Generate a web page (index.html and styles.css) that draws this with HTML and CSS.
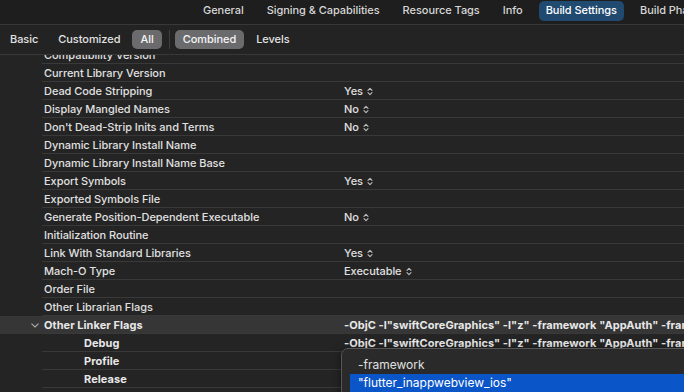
FILE: index.html
```html
<!DOCTYPE html>
<html>
<head>
<meta charset="utf-8">
<link rel="stylesheet" href="styles.css">
</head>
<body>
<div class="app">
  <div class="topbar">
    <span class="tab">General</span>
    <span class="tab">Signing &amp; Capabilities</span>
    <span class="tab">Resource Tags</span>
    <span class="tab">Info</span>
    <span class="tab active">Build Settings</span>
    <span class="tab">Build Phases</span>
  </div>
  <div class="toolbar">
    <span class="seg">Basic</span>
    <span class="seg">Customized</span>
    <span class="seg on">All</span>
    <span class="divider"></span>
    <span class="seg on">Combined</span>
    <span class="seg">Levels</span>
  </div>
  <div class="list">
    <div class="rows">
      <div class="row"><div class="gutter"></div><div class="cell name">Compatibility Version</div><div class="cell value"></div></div>
      <div class="row"><div class="gutter"></div><div class="cell name">Current Library Version</div><div class="cell value"></div></div>
      <div class="row"><div class="gutter"></div><div class="cell name">Dead Code Stripping</div><div class="cell value">Yes<svg class="updown" viewBox="0 0 6 9"><path d="M1 3.4 L3 1.4 L5 3.4 M1 5.6 L3 7.6 L5 5.6"/></svg></div></div>
      <div class="row"><div class="gutter"></div><div class="cell name">Display Mangled Names</div><div class="cell value">No<svg class="updown" viewBox="0 0 6 9"><path d="M1 3.4 L3 1.4 L5 3.4 M1 5.6 L3 7.6 L5 5.6"/></svg></div></div>
      <div class="row"><div class="gutter"></div><div class="cell name">Don't Dead-Strip Inits and Terms</div><div class="cell value">No<svg class="updown" viewBox="0 0 6 9"><path d="M1 3.4 L3 1.4 L5 3.4 M1 5.6 L3 7.6 L5 5.6"/></svg></div></div>
      <div class="row"><div class="gutter"></div><div class="cell name">Dynamic Library Install Name</div><div class="cell value"></div></div>
      <div class="row"><div class="gutter"></div><div class="cell name">Dynamic Library Install Name Base</div><div class="cell value"></div></div>
      <div class="row"><div class="gutter"></div><div class="cell name">Export Symbols</div><div class="cell value">Yes<svg class="updown" viewBox="0 0 6 9"><path d="M1 3.4 L3 1.4 L5 3.4 M1 5.6 L3 7.6 L5 5.6"/></svg></div></div>
      <div class="row"><div class="gutter"></div><div class="cell name">Exported Symbols File</div><div class="cell value"></div></div>
      <div class="row"><div class="gutter"></div><div class="cell name">Generate Position-Dependent Executable</div><div class="cell value">No<svg class="updown" viewBox="0 0 6 9"><path d="M1 3.4 L3 1.4 L5 3.4 M1 5.6 L3 7.6 L5 5.6"/></svg></div></div>
      <div class="row"><div class="gutter"></div><div class="cell name">Initialization Routine</div><div class="cell value"></div></div>
      <div class="row"><div class="gutter"></div><div class="cell name">Link With Standard Libraries</div><div class="cell value">Yes<svg class="updown" viewBox="0 0 6 9"><path d="M1 3.4 L3 1.4 L5 3.4 M1 5.6 L3 7.6 L5 5.6"/></svg></div></div>
      <div class="row"><div class="gutter"></div><div class="cell name">Mach-O Type</div><div class="cell value">Executable<svg class="updown" viewBox="0 0 6 9"><path d="M1 3.4 L3 1.4 L5 3.4 M1 5.6 L3 7.6 L5 5.6"/></svg></div></div>
      <div class="row"><div class="gutter"></div><div class="cell name">Order File</div><div class="cell value"></div></div>
      <div class="row"><div class="gutter"></div><div class="cell name">Other Librarian Flags</div><div class="cell value"></div></div>
      <div class="row selected"><div class="gutter"><svg class="disclose" viewBox="0 0 8 5"><path d="M0.8 0.8 L4 4 L7.2 0.8"/></svg></div><div class="cell name bold">Other Linker Flags</div><div class="cell value bold">-ObjC -l"swiftCoreGraphics" -l"z" -framework "AppAuth" -framework "flutter_inappwebview_ios"</div></div>
      <div class="row"><div class="gutter"></div><div class="cell name bold sub">Debug</div><div class="cell value bold">-ObjC -l"swiftCoreGraphics" -l"z" -framework "AppAuth" -framework "flutter_inappwebview_ios"</div></div>
      <div class="row"><div class="gutter"></div><div class="cell name bold sub">Profile</div><div class="cell value bold"></div></div>
      <div class="row"><div class="gutter"></div><div class="cell name bold sub">Release</div><div class="cell value bold"></div></div>
      <div class="row"><div class="gutter"></div><div class="cell name"></div><div class="cell value"></div></div>
    </div>
    <div class="popup">
      <div class="item">-framework</div>
      <div class="item hl">"flutter_inappwebview_ios"</div>
      <div class="item">-framework</div>
    </div>
  </div>
</div>
</body>
</html>
```

FILE: styles.css
```css
* { box-sizing: border-box; }
html, body {
  margin: 0;
  padding: 0;
  background: #242424;
  width: 684px;
  height: 392px;
  overflow: hidden;
}
.app {
  font-family: Inter, "Liberation Sans", sans-serif;
  font-size: 11px;
  color: #dedede;
  width: 684px;
  height: 392px;
  display: flex;
  flex-direction: column;
}
.topbar {
  height: 25px;
  background: #1e1e1e;
  border-bottom: 1px solid #383838;
  display: flex;
  align-items: flex-start;
  padding-top: 1px;
  padding-left: 196px;
  gap: 9px;
  white-space: nowrap;
  overflow: hidden;
  flex: none;
}
.tab {
  height: 20px;
  line-height: 19px;
  padding: 0 7px;
  color: #d6d6d6;
  font-weight: 500;
  border-radius: 5px;
  letter-spacing: -0.05px;
}
.tab.active {
  background: #214a70;
  color: #ffffff;
}
.toolbar {
  height: 30px;
  background: #232323;
  border-bottom: 1px solid #383838;
  display: flex;
  align-items: center;
  padding-left: 2px;
  gap: 4px;
  flex: none;
}
.seg {
  height: 19px;
  line-height: 19px;
  padding: 0 8px;
  font-weight: 500;
  color: #e2e2e2;
  border-radius: 5px;
  letter-spacing: -0.05px;
}
.seg.on {
  background: #6b6b6e;
  color: #f4f4f4;
}
.divider {
  width: 1px;
  height: 19px;
  background: #3e3e3e;
  margin: 0 1px 0 3px;
}
.list {
  flex: 1;
  position: relative;
  overflow: hidden;
}
.rows {
  margin-top: -9px;
}
.row {
  display: grid;
  grid-template-columns: 42px 300px 1fr;
  height: 18px;
}
.row.selected {
  background: #363636;
}
.gutter {
  display: flex;
  align-items: center;
  justify-content: flex-end;
  padding-right: 3px;
  padding-top: 1px;
}
.cell {
  height: 18px;
  line-height: 19px;
  border-bottom: 1px solid #393939;
  white-space: nowrap;
  overflow: hidden;
  color: #e0e0e0;
  font-weight: 500;
  letter-spacing: -0.05px;
}
.name { padding-left: 2px; }
.name.sub { padding-left: 42px; }
.value {
  padding-left: 2px;
  padding-top: 1px;
  display: flex;
  align-items: center;
  align-self: stretch;
  line-height: 16px;
}
.bold {
  font-weight: 700;
  color: #e8e8e8;
  letter-spacing: 0.05px;
}
.updown {
  width: 6px;
  height: 9px;
  margin-left: 4px;
  fill: none;
  stroke: #bdbdbd;
  stroke-width: 1.1;
  stroke-linecap: round;
  stroke-linejoin: round;
  flex: none;
}
.disclose {
  width: 8px;
  height: 5px;
  fill: none;
  stroke: #a8a8a8;
  stroke-width: 1.1;
  stroke-linecap: round;
  stroke-linejoin: round;
}
.popup {
  position: absolute;
  left: 341px;
  top: 293px;
  width: 420px;
  height: 80px;
  background: #2a2a2a;
  border: 1px solid #565656;
  border-radius: 7px;
  padding: 7px 0 0 8px;
  box-shadow: 0 2px 8px rgba(0,0,0,0.5);
}
.item {
  height: 18px;
  line-height: 18px;
  padding-left: 8px;
  font-size: 12px;
  color: #e0e0e0;
  white-space: nowrap;
}
.item.hl {
  background: #0a55c8;
  color: #ffffff;
}
```
